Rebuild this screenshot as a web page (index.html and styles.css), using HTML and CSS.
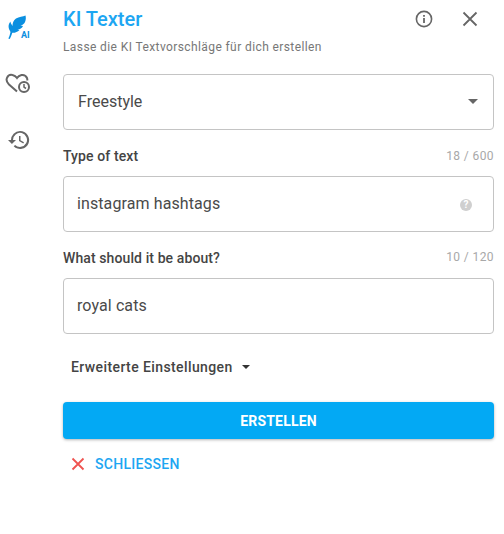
FILE: index.html
```html
<!DOCTYPE html>
<html lang="en">
<head>
    <meta charset="UTF-8">
    <meta name="viewport" content="width=device-width, initial-scale=1.0">
    <title>KI Texter</title>
    <link rel="stylesheet" href="styles.css">
</head>
<body>
    <div class="layout">
        <!-- Sidebar -->
        <nav class="sidebar">
            <div class="side-item side-logo">
                <svg width="18" height="24" viewBox="0 0 18 24">
                    <path fill="#0a8fe0" d="M17.500 .5C15 2 11 1.500 8 3.500 5.500 5 4.500 8 4.500 11L3 8.500C2.600 7.500 2.500 7 2.500 6.500 .5 8.500 .2 11.500 1 14L2.500 17C2 19.500 1.200 22 .3 23.500L1.800 24C2.800 22 3.600 20 4.300 17.800 7 18 9.500 17 11.500 15L9.500 14.500C12 14.500 14 13 15 11L12.500 10.500C15 10 16.500 8.500 17.200 6.500 18 4.500 18 2.500 17.500 .5z"/>
                </svg>
                <span class="ai-tag">AI</span>
            </div>
            <div class="side-item side-fav">
                <svg width="26" height="24" viewBox="0 0 26 24" fill="none" stroke="#666" stroke-width="2">
                    <path d="M12 19.500 4 12.500C1.500 10 1 8 2 5.800 3 3.500 5.500 2.500 7.500 3c2 .4 3.500 1.500 4.500 3 1-1.500 2.500-2.600 4.500-3 2.500-.4 4.500.8 5.500 3 .3.800.4 1.500.3 2.500"/>
                    <circle cx="19" cy="15" r="5"/>
                    <path d="M19 12v3.200l2 1.300" stroke-width="1.500"/>
                </svg>
            </div>
            <div class="side-item side-history">
                <svg width="24" height="24" viewBox="0 0 24 24">
                    <path fill="#666" d="M13 3a9 9 0 0 0-9 9H1l3.900 3.900L9 12H6a7 7 0 1 1 2.100 4.900l-1.400 1.400A9 9 0 1 0 13 3zm-1 5v5l4.300 2.500.7-1.200-3.500-2.100V8z"/>
                </svg>
            </div>
        </nav>

        <!-- Main form -->
        <main class="content">
            <header class="top">
                <div class="titles">
                    <h1>KI Texter</h1>
                    <p class="subtitle">Lasse die KI Textvorschläge für dich erstellen</p>
                </div>
                <div class="top-icons">
                    <svg width="20" height="20" viewBox="0 0 20 20" fill="none" stroke="#666">
                        <circle cx="10" cy="10" r="7.600" stroke-width="1.600"/>
                        <path d="M10 9v5" stroke-width="1.800"/>
                        <path d="M10 6v1.800" stroke-width="1.800"/>
                    </svg>
                    <svg width="20" height="20" viewBox="0 0 20 20" fill="none" stroke="#666" stroke-width="1.800">
                        <path d="M3.500 3.500l13 13M16.500 3.500l-13 13"/>
                    </svg>
                </div>
            </header>

            <div class="field select-field">
                <span>Freestyle</span>
                <i class="caret"></i>
            </div>

            <div class="label-row type-row">
                <label>Type of text</label>
                <span class="count">18 / 600</span>
            </div>
            <div class="field">
                <span>instagram hashtags</span>
                <span class="help">?</span>
            </div>

            <div class="label-row about-row">
                <label>What should it be about?</label>
                <span class="count">10 / 120</span>
            </div>
            <div class="field">
                <span>royal cats</span>
            </div>

            <div class="advanced">
                <span>Erweiterte Einstellungen</span>
                <i class="caret small"></i>
            </div>

            <button class="create" type="button">ERSTELLEN</button>

            <div class="close-row">
                <svg width="14" height="14" viewBox="0 0 14 14" fill="none" stroke="#ef5350" stroke-width="1.800">
                    <path d="M1.500 1.500l11 11M12.500 1.500l-11 11"/>
                </svg>
                <span>SCHLIESSEN</span>
            </div>
        </main>
    </div>
</body>
</html>
```

FILE: styles.css
```css
body {
    margin: 0;
    background-color: white;
    font-family: Roboto, "Liberation Sans", sans-serif;
    color: #444;
}
.layout {
    display: flex;
    height: 534px;
    overflow: hidden;
}
.sidebar {
    width: 63px;
    flex-shrink: 0;
    display: flex;
    flex-direction: column;
    padding-top: 15px;
    box-sizing: border-box;
}
.side-item {
    display: flex;
    padding-left: 8px;
}
.side-logo {
    position: relative;
    height: 27px;
}
.ai-tag {
    position: absolute;
    left: 21px;
    top: 15px;
    font-size: 9px;
    font-weight: 700;
    color: #0a8fe0;
}
.side-fav {
    margin-top: 30px;
    padding-left: 5px;
}
.side-history {
    margin-top: 32px;
    padding-left: 7px;
}
.content {
    width: 431px;
    display: flex;
    flex-direction: column;
}
.top {
    display: flex;
    justify-content: space-between;
    height: 74px;
}
h1 {
    margin: 7px 0 0;
    font-size: 20px;
    line-height: 24px;
    font-weight: 500;
    color: #1da6f2;
}
.subtitle {
    margin: 9px 0 0;
    font-size: 12px;
    line-height: 14px;
    letter-spacing: 0.4px;
    color: #777;
}
.top-icons {
    display: flex;
    gap: 26px;
    padding: 9px 14px 0 0;
    align-items: flex-start;
}
.field {
    height: 56px;
    box-sizing: border-box;
    border: 1px solid #c4c4c4;
    border-radius: 4px;
    display: flex;
    align-items: center;
    justify-content: space-between;
    padding: 0 21px 2px 13px;
    font-size: 16px;
    letter-spacing: 0.1px;
    color: #4a4a4a;
}
.select-field {
    padding: 0 15px 2px 14px;
    letter-spacing: 0;
}
.caret {
    width: 0;
    height: 0;
    border-left: 5px solid transparent;
    border-right: 5px solid transparent;
    border-top: 5px solid #666;
}
.caret.small {
    border-left-width: 4px;
    border-right-width: 4px;
    border-top: 4px solid #333;
}
.label-row {
    display: flex;
    justify-content: space-between;
    align-items: flex-start;
    height: 46px;
    box-sizing: border-box;
    padding-top: 18px;
}
.type-row .count {
    margin-top: 1px;
}
label {
    font-size: 14px;
    line-height: 17px;
    font-weight: 500;
    letter-spacing: 0.1px;
    color: #444;
}
.count {
    font-size: 12px;
    line-height: 14px;
    letter-spacing: 0.4px;
    color: #a8a8a8;
}
.help {
    width: 12px;
    height: 12px;
    margin-top: 4px;
    border-radius: 50%;
    background-color: #cfcfcf;
    color: white;
    font-size: 10px;
    font-weight: 700;
    line-height: 12px;
    text-align: center;
}
.advanced {
    display: flex;
    align-items: center;
    gap: 9px;
    margin-top: 21px;
    padding-left: 8px;
    height: 24px;
    font-size: 14px;
    font-weight: 500;
    letter-spacing: 0.4px;
    color: #444;
}
.create {
    margin-top: 23px;
    height: 37px;
    border: none;
    border-radius: 4px;
    background-color: #03a9f4;
    color: white;
    font-family: inherit;
    font-size: 14px;
    font-weight: 700;
    letter-spacing: 0.2px;
    box-shadow: 0 1px 3px rgba(0, 0, 0, 0.3);
}
.close-row {
    display: flex;
    align-items: center;
    gap: 10px;
    margin-top: 15px;
    padding-left: 8px;
    height: 20px;
    font-size: 14px;
    font-weight: 500;
    letter-spacing: 0.3px;
    color: #1da6f2;
}
```
